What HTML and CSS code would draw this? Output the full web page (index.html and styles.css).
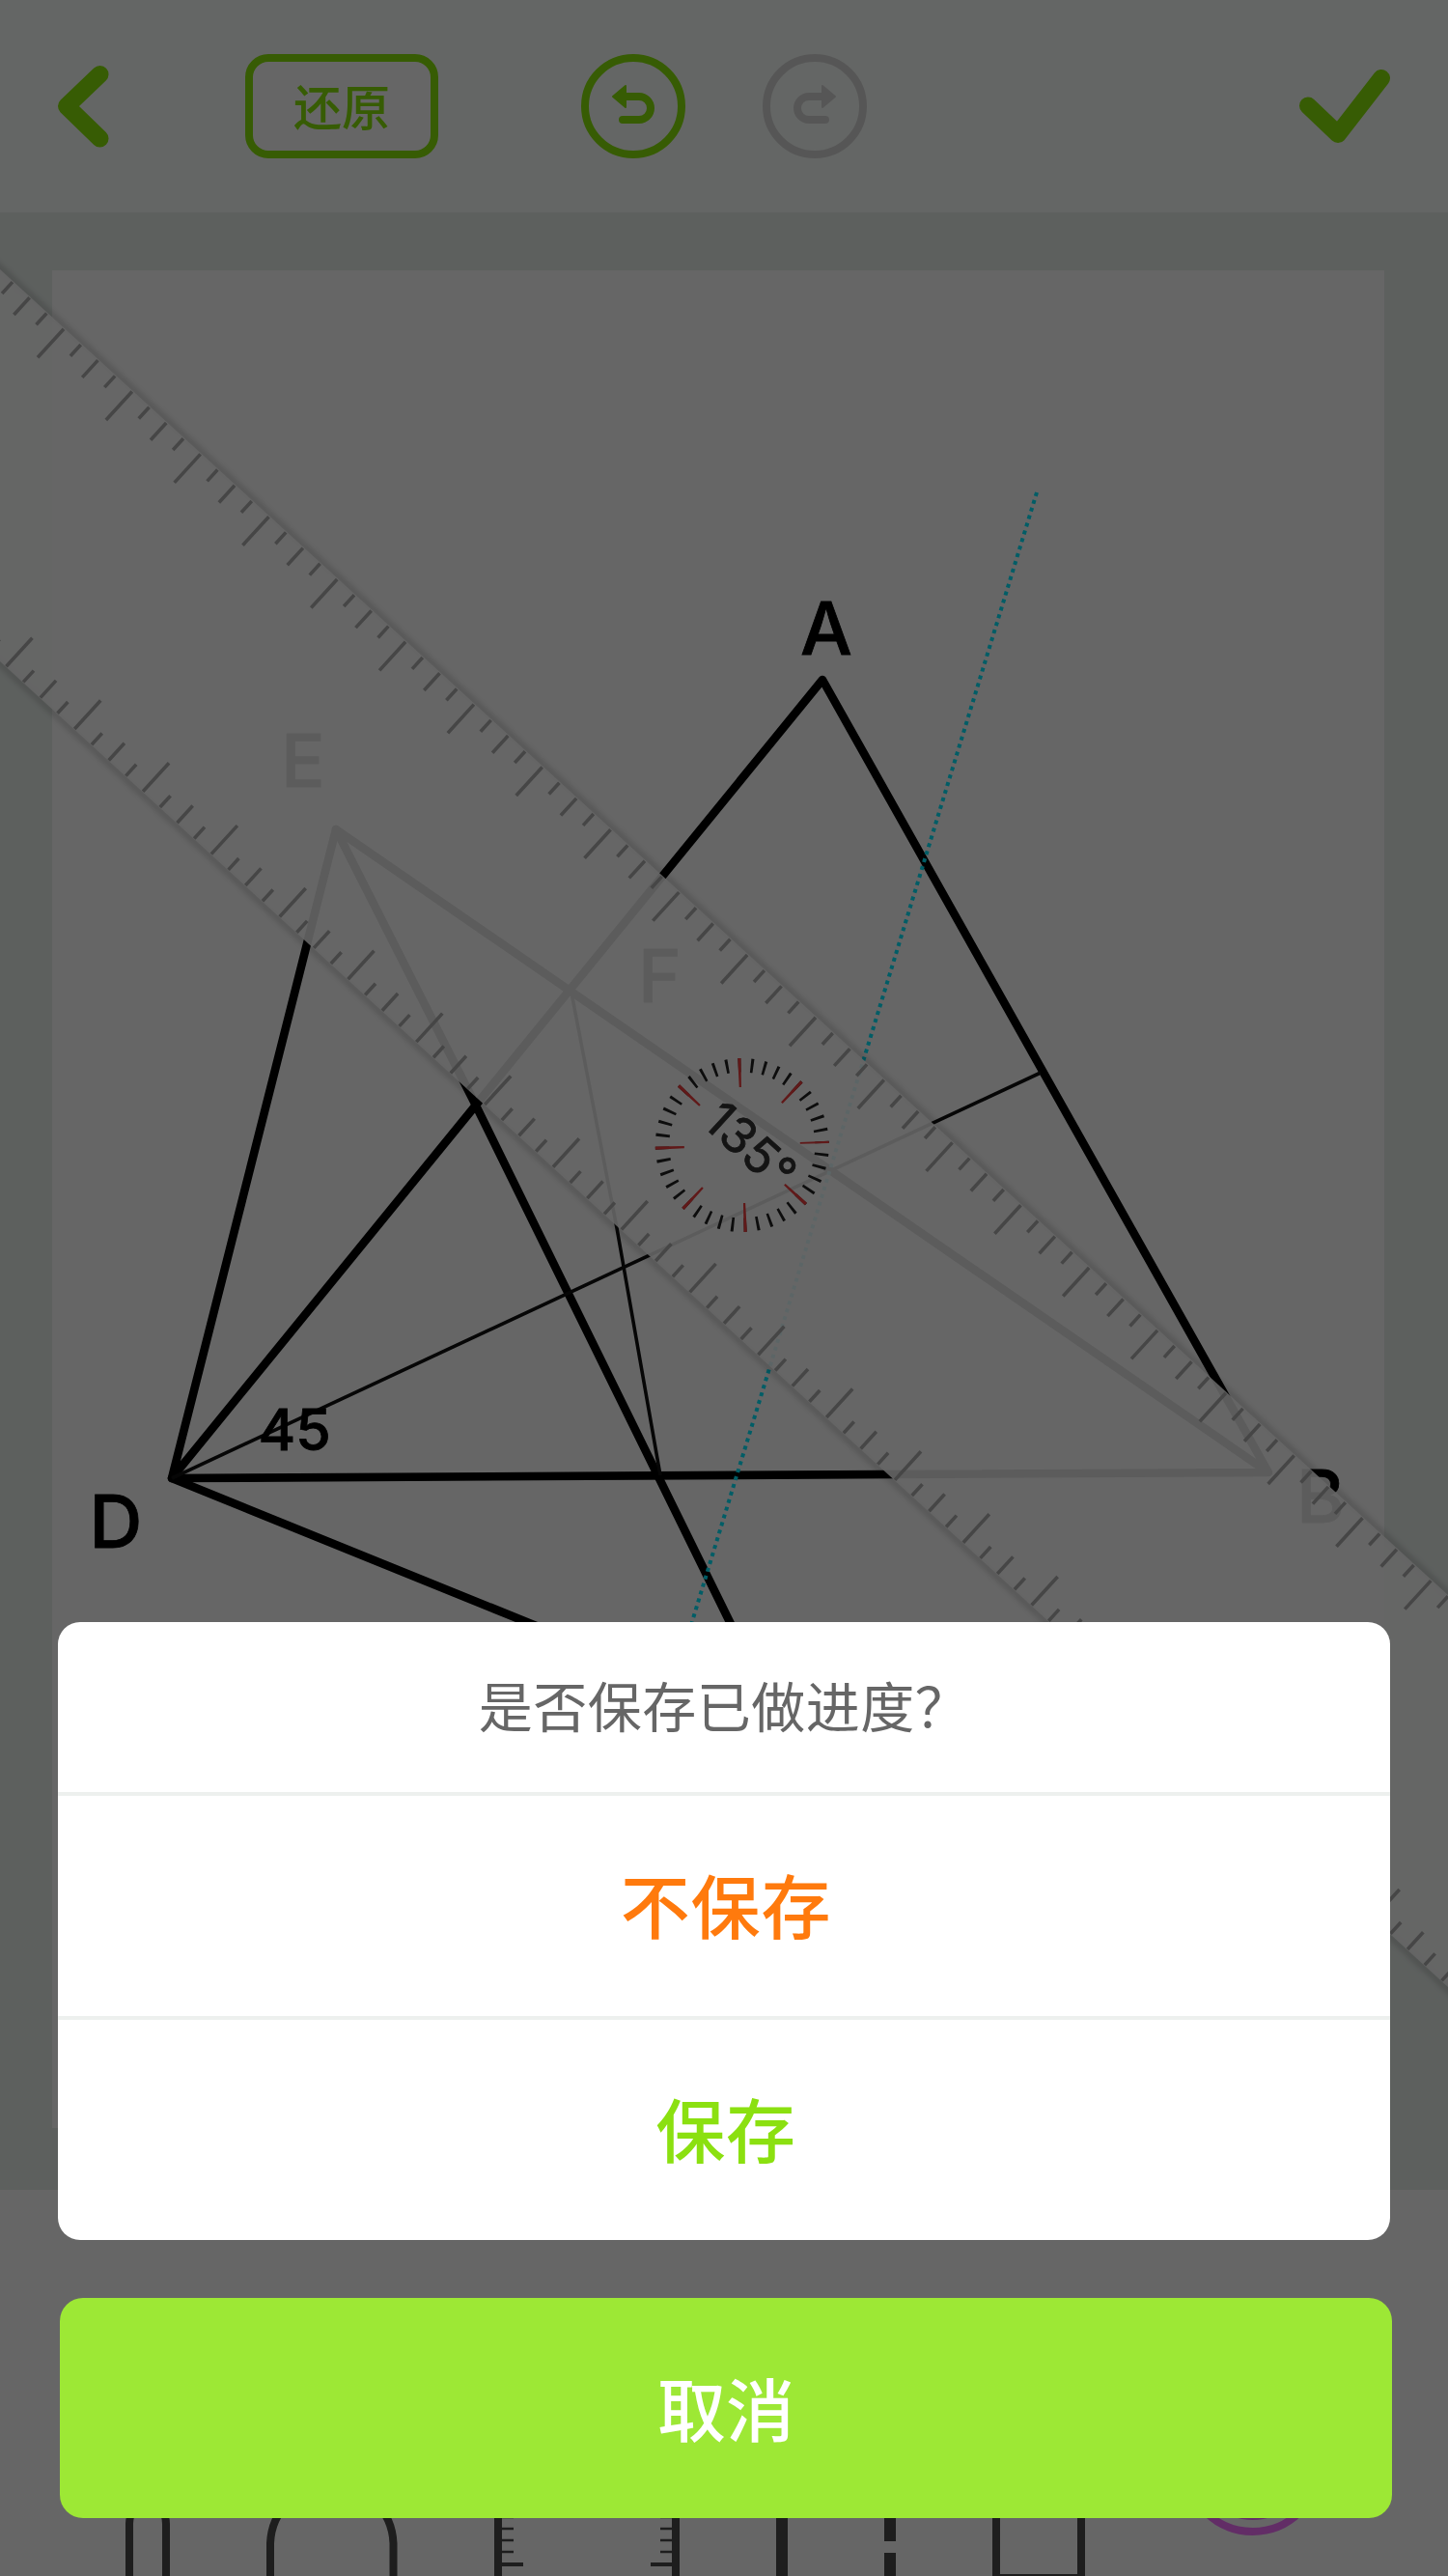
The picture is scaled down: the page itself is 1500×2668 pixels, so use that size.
FILE: index.html
```html
<!DOCTYPE html>
<html lang="zh-CN">
<head>
<meta charset="utf-8">
<title>几何画板</title>
<link rel="stylesheet" href="styles.css">
</head>
<body>
<div class="app">
  <header class="topbar">
    <svg class="back" width="56" height="90" viewBox="58 65 56 90"><path d="M103.500 77L69 110L103.500 143.500"/></svg>
    <button class="restore">还原</button>
    <svg class="undo" width="108" height="108" viewBox="0 0 108 108"><circle cx="54" cy="54" r="50"/><path d="M43 44H60a12 12 0 0 1 0 24H43"/><path class="tip" d="M33 44L46 33V55Z"/></svg>
    <svg class="redo" width="108" height="108" viewBox="0 0 108 108"><circle cx="54" cy="54" r="50"/><path d="M65 44H48a12 12 0 0 0 0 24H65"/><path class="tip" d="M75 44L62 33V55Z"/></svg>
    <svg class="confirm" width="98" height="80" viewBox="1344 70 98 80"><path d="M1355 109.500L1386 139L1431 81"/></svg>
  </header>
  <main class="board">
    <div class="paper"></div>
    <svg class="drawing" width="1500" height="2048" viewBox="0 220 1500 2048">
      <g class="bold">
        <path d="M178 1531L852 704L1314 1525L348 859L178 1531L1314 1525"/>
        <path d="M348 859L492 1143L759 1686"/>
        <path d="M178 1531L558 1685"/>
      </g>
      <g class="thin"><path d="M178 1531L1078 1111"/><path d="M591 1023L639 1272L684 1528"/></g>
      <path class="dotted" d="M1074 510L715 1686"/>
      <g class="letters">
        <text x="829" y="678">A</text>
        <text x="291" y="814.500">E</text>
        <text x="661" y="1038">F</text>
        <text x="1343" y="1576.500">B</text>
        <text x="92.500" y="1602.500">D</text>
        <text class="angle" x="267.500" y="1502">45</text>
      </g>
      <g transform="translate(66.700 340) rotate(42.470)">
        <g class="edge"><path d="M-250 -1H2600"/><path d="M-250 301H2600"/></g>
        <rect class="body" x="-250" y="0" width="2850" height="299.500"/>
        <g class="ticks">
          <path class="big" d="M-193.800 21H2600M-193.800 279H2600"/>
          <path class="mid" d="M-145.800 13H2600M-145.800 287H2600"/>
          <path class="small" d="M-169.800 9H2600M-169.800 291H2600"/>
        </g>
      </g>
      <g class="dial" transform="translate(768.800 1186)">
        <g transform="rotate(-2.300)">
          <circle class="minor" r="82.750"/>
          <circle class="major" r="75"/>
        </g>
        <text transform="rotate(42.470)" x="-46" y="13">135°</text>
      </g>
    </svg>
  </main>
  <footer class="toolbar">
    <svg width="1500" height="400" viewBox="0 2268 1500 400">
      <g class="tool">
        <path d="M134 2668V2614Q134 2600 153 2560Q172 2600 172 2614V2668"/>
        <path d="M280 2668V2634A63.800 63.800 0 0 1 407.500 2634V2668"/>
        <path d="M516 2570V2668M700 2570V2668"/>
        <path class="fine" d="M520 2607H532M520 2619H532M520 2631H532M520 2643H532M696 2607H684M696 2619H684M696 2631H684M696 2643H684"/>
        <path class="mark" d="M520 2656H542M696 2656H674"/>
        <path class="wide" d="M810 2560V2668M922 2560V2632M922 2644V2668"/>
        <path d="M1032 2580V2670H1120V2580Z"/>
      </g>
      <g class="color"><circle cx="1297.700" cy="2553" r="69"/><circle class="dot" cx="1297.700" cy="2553" r="57"/></g>
    </svg>
  </footer>
</div>
<div class="overlay">
  <section class="sheet">
    <div class="title">是否保存已做进度？</div>
    <button class="option discard">不保存</button>
    <button class="option save">保存</button>
  </section>
  <button class="cancel">取消</button>
</div>
</body>
</html>
```
FILE: styles.css
```css
* { box-sizing: border-box; }
body {
  margin: 0;
  width: 1500px;
  height: 2668px;
  overflow: hidden;
  font-family: "Noto Sans CJK SC", sans-serif;
}
svg { display: block; flex: none; fill: none; }
button { border: 0; padding: 0; font-family: inherit; background: none; }
.app { display: flex; flex-direction: column; height: 2668px; background: #fff; }

.topbar {
  display: flex;
  align-items: center;
  height: 220px;
  flex: none;
  padding: 0 58px;
  background: #fafffc;
}
.topbar svg { stroke: #89e60c; stroke-linecap: round; stroke-linejoin: round; stroke-width: 8; }
.topbar .back, .topbar .confirm { stroke-width: 18; }
.restore {
  width: 200px;
  height: 108px;
  margin-left: 140px;
  padding-bottom: 5px;
  border: 8px solid #89e60c;
  border-radius: 24px;
  background: #fff;
  color: #89e60c;
  font-size: 50px;
  font-weight: 500;
  line-height: 86px;
}
.undo { margin-left: 148px; }
.redo { margin-left: 80px; }
.topbar .redo { stroke: #d8d8d8; }
.topbar .tip { fill: #89e60c; stroke-width: 2; }
.topbar .redo .tip { fill: #d8d8d8; }
.confirm { margin-left: auto; }

.board { position: relative; height: 2048px; flex: none; padding: 60px 66px 64px 54px; background: #e9f0ec; }
.paper { height: 1924px; background: #fff; }
.drawing { position: absolute; inset: 0; }
.bold { stroke: #000; stroke-width: 8.6; stroke-linejoin: round; stroke-linecap: round; }
.thin { stroke: #111; stroke-width: 3.6; }
.dotted { stroke: #00e8ff; stroke-width: 4; stroke-dasharray: 4 4.260; }
.letters { fill: #000; stroke: #000; stroke-width: .8; font: 500 76px Inter, sans-serif; }
.letters .angle { font-size: 59px; }
.edge { stroke: rgba(0, 0, 0, .22); stroke-width: 5; filter: blur(3px); }
.body { fill: rgba(255, 255, 255, .9); }
.ticks { stroke: #afafaf; }
.big { stroke-width: 40; stroke-dasharray: 3.600 92.400; }
.mid { stroke-width: 24; stroke-dasharray: 3.600 92.400; }
.small { stroke-width: 16; stroke-dasharray: 3.600 44.400; }
.minor { stroke: #222; stroke-width: 14.500; stroke-dasharray: 2.800 10.198; stroke-dashoffset: 1.400; }
.major { stroke: #f04040; stroke-width: 30; stroke-dasharray: 2.800 56.105; stroke-dashoffset: 1.400; }
.dial text { fill: #333; stroke: #333; stroke-width: .8; font: 400 51px Inter, sans-serif; }

.toolbar { height: 400px; flex: none; }
.tool { stroke: #4b4b4b; stroke-width: 8; }
.tool .fine { stroke-width: 2.500; }
.tool .mark { stroke-width: 4; }
.tool .wide { stroke-width: 12; }
.color { stroke: #f472ff; stroke-width: 8; }
.color .dot { fill: #f472ff; stroke: none; }

.overlay {
  position: absolute;
  inset: 0;
  height: 2668px;
  display: flex;
  flex-direction: column;
  justify-content: flex-end;
  gap: 60px;
  padding: 0 58px 60px 60px;
  background: rgba(0, 0, 0, .6);
}
.sheet { display: flex; flex-direction: column; width: 1380px; height: 640px; border-radius: 23px; background: #fff; }
.title { flex: none; height: 176px; line-height: 170px; text-align: center; font-size: 56px; letter-spacing: .5px; color: #666; }
.option { height: 232px; padding: 0 0 7px 4px; border-top: 4px solid #edf0ee; font-size: 72px; letter-spacing: .8px; font-weight: 500; line-height: 222px; text-align: center; }
.discard { color: #ff7a0d; }
.save { color: #8be010; }
.cancel { width: 1380px; height: 228px; margin-left: 2px; padding-bottom: 5px; border-radius: 24px; background: #9de835; color: #fff; font-size: 71px; font-weight: 500; line-height: 222px; }
```
